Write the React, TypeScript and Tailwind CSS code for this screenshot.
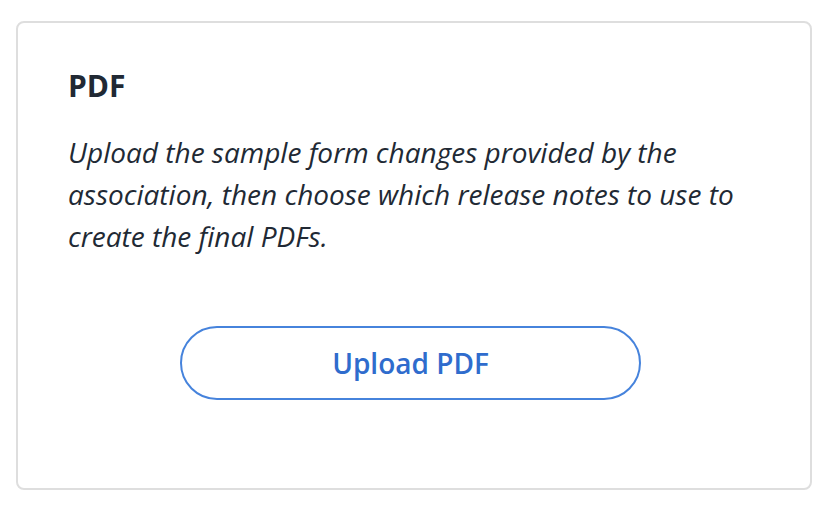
export default function App() {
  return (
    <div className="min-h-screen bg-white pt-[21px] pl-4" style={{ fontFamily: '"Open Sans", sans-serif' }}>
      <div className="w-[796px] h-[469px] rounded-lg border-2 border-[#dedede] bg-white pl-[50px] pr-[57px] pt-[45px]">
        <h2 className="text-[30px] leading-[36px] font-bold text-[#212934]">PDF</h2>
        <p className="mt-[27px] text-[28px] leading-[42px] italic text-[#212934]">
          Upload the sample form changes provided by the association, then choose which release notes to use to
          create the final PDFs.
        </p>
        <div className="mt-[69px] flex justify-center">
          <button className="w-[461px] h-[74px] rounded-full border-2 border-[#4683dc] bg-white text-[28px] font-semibold text-[#2f6ccd] flex items-center justify-center">
            Upload PDF
          </button>
        </div>
      </div>
    </div>
  );
}
